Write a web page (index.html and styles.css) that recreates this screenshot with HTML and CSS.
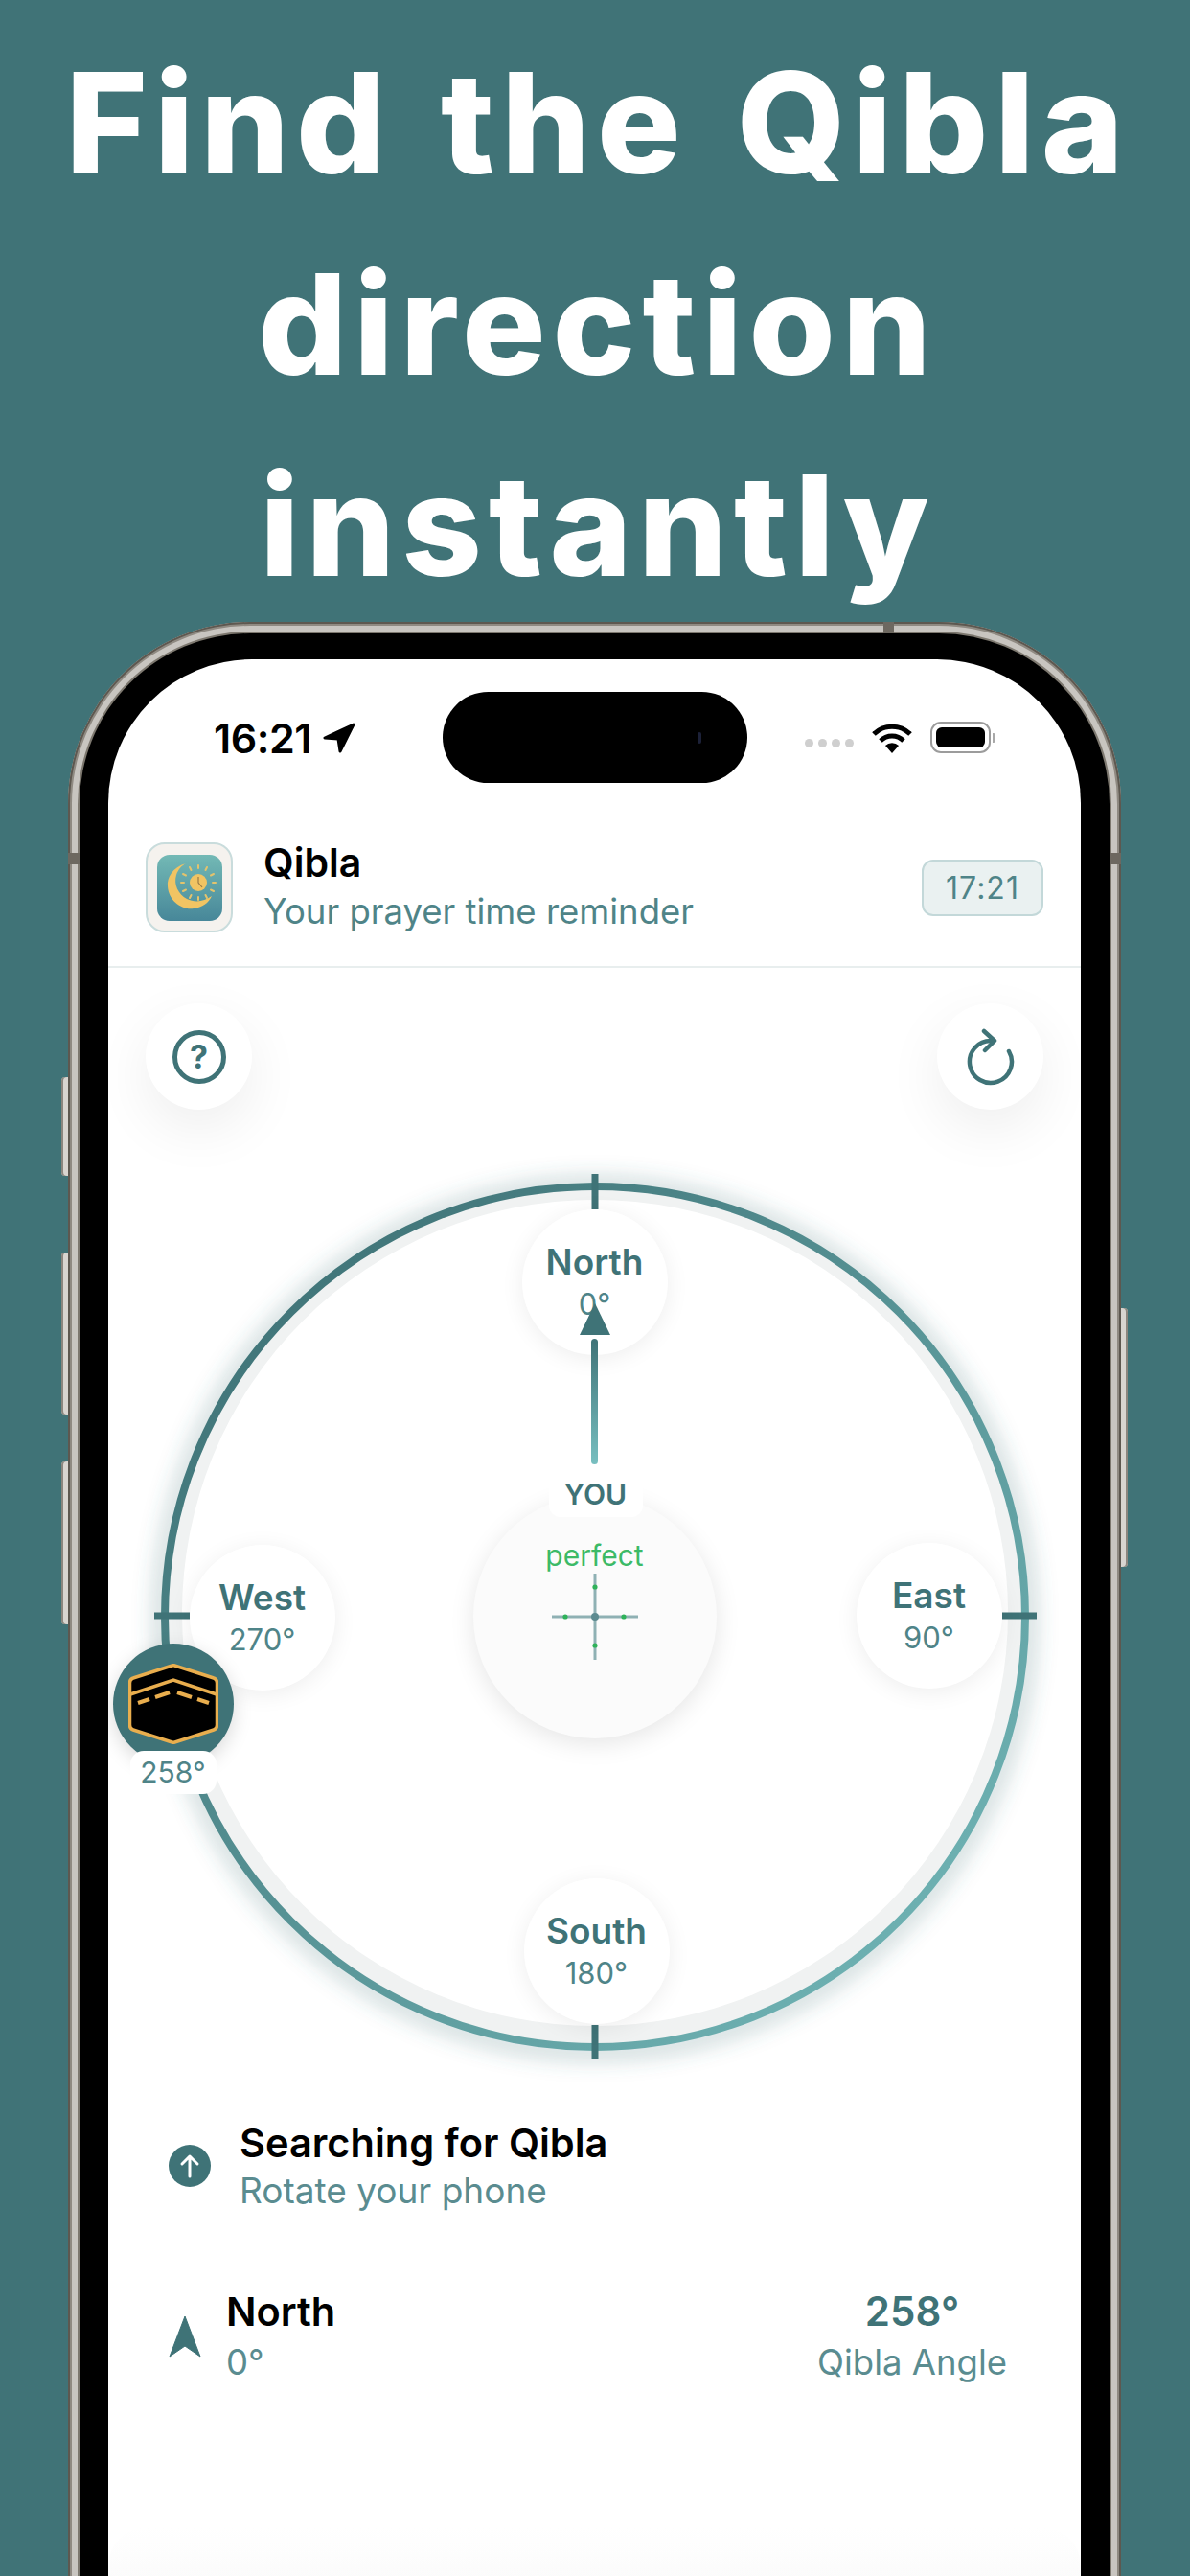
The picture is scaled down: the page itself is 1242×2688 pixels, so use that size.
FILE: index.html
```html
<!DOCTYPE html>
<html lang="en">
<head>
    <meta charset="UTF-8">
    <meta name="viewport" content="width=device-width, initial-scale=1.0">
    <title>Find the Qibla direction instantly</title>
    <link rel="stylesheet" href="styles.css">
</head>
<body>

    <div class="page">
        <h1 class="headline">Find the Qibla<br>direction<br>instantly</h1>

        <div class="phone">
            <!-- Side buttons -->
            <span class="side-btn side-mute"></span>
            <span class="side-btn side-up"></span>
            <span class="side-btn side-down"></span>
            <span class="side-btn side-power"></span>

            <!-- Antenna lines on the frame -->
            <span class="antenna antenna-left"></span>
            <span class="antenna antenna-right"></span>
            <span class="antenna antenna-top"></span>

            <div class="bezel">
                <div class="screen">

                    <!-- Status bar -->
                    <div class="status-bar">
                        <div class="status-left">
                            <span class="status-time">16:21</span>
                            <svg class="status-arrow" viewBox="0 0 34 32"><path d="M32 2 L2 16 L16 17 L18 30 Z" fill="#000" stroke="#000" stroke-width="3" stroke-linejoin="round"/></svg>
                        </div>
                        <div class="island"><span class="island-dot"></span></div>
                        <div class="status-right">
                            <div class="signal"><i></i><i></i><i></i><i></i></div>
                            <svg class="wifi" viewBox="0 0 44 32">
                                <path d="M3 12 A27 27 0 0 1 41 12" fill="none" stroke="#000" stroke-width="5"/>
                                <path d="M10 19 A17 17 0 0 1 34 19" fill="none" stroke="#000" stroke-width="5"/>
                                <path d="M15 24 A10 10 0 0 1 29 24 L22 32 Z" fill="#000"/>
                            </svg>
                            <div class="battery"><span class="battery-level"></span></div>
                            <span class="battery-nub"></span>
                        </div>
                    </div>

                    <!-- App header -->
                    <div class="app-header">
                        <div class="app-icon">
                            <svg viewBox="0 0 68 69" width="68" height="69">
                                <defs>
                                    <linearGradient id="icon-bg" x1="0" y1="0" x2="0" y2="1">
                                        <stop offset="0" stop-color="#73b9b5"/>
                                        <stop offset="1" stop-color="#478799"/>
                                    </linearGradient>
                                </defs>
                                <rect width="68" height="69" rx="13" fill="url(#icon-bg)"/>
                                <path d="M30 9 C16 13 10 24 11 33 C12 48 26 58 38 56 C47 55 54 50 57 43 C49 49 39 50 31 46 C22 41 17 31 20 21 C22 15 26 11 30 9 Z" fill="#f1c463"/>
                                <circle cx="43" cy="29" r="9" fill="#f1c463"/>
                                <path d="M43 23 L43 29 L47 34" fill="none" stroke="#9a7a45" stroke-width="1.2"/>
                                <g stroke="#e3c36d" stroke-width="2" stroke-linecap="round">
                                    <line x1="43" y1="11" x2="43" y2="14"/>
                                    <line x1="52" y1="13" x2="50.5" y2="16"/>
                                    <line x1="59" y1="20" x2="56" y2="21.5"/>
                                    <line x1="61" y1="29" x2="58" y2="29"/>
                                    <line x1="59" y1="38" x2="56" y2="36.5"/>
                                    <line x1="52" y1="45" x2="50.5" y2="42"/>
                                    <line x1="43" y1="47" x2="43" y2="44"/>
                                    <line x1="34" y1="45" x2="35.5" y2="42"/>
                                    <line x1="27" y1="38" x2="30" y2="36.5"/>
                                    <line x1="25" y1="29" x2="28" y2="29"/>
                                    <line x1="27" y1="20" x2="30" y2="21.5"/>
                                    <line x1="34" y1="13" x2="35.5" y2="16"/>
                                </g>
                            </svg>
                        </div>
                        <div class="app-text">
                            <div class="app-title">Qibla</div>
                            <div class="app-subtitle">Your prayer time reminder</div>
                        </div>
                        <div class="time-chip">17:21</div>
                    </div>

                    <!-- Help and reload buttons -->
                    <div class="tools">
                        <div class="tool-btn">
                            <span class="help-icon">?</span>
                        </div>
                        <div class="tool-btn">
                            <svg class="reload-icon" viewBox="0 0 50 60">
                                <path d="M25 13 A22 22 0 1 0 44 24" fill="none" stroke="#3f7377" stroke-width="4.5" stroke-linecap="round"/>
                                <path d="M18 3 L29 13 L19 23" fill="none" stroke="#3f7377" stroke-width="4.5" stroke-linecap="round" stroke-linejoin="round"/>
                            </svg>
                        </div>
                    </div>

                    <!-- Compass dial -->
                    <div class="dial">
                        <svg class="dial-ring" viewBox="0 0 930 930">
                            <defs>
                                <linearGradient id="ring-color" x1="0" y1="0" x2="1" y2="1">
                                    <stop offset="0.1" stop-color="#3f7377"/>
                                    <stop offset="0.9" stop-color="#6fb3b4"/>
                                </linearGradient>
                                <filter id="ring-glow" x="-10%" y="-10%" width="120%" height="120%">
                                    <feGaussianBlur stdDeviation="11"/>
                                </filter>
                            </defs>
                            <circle cx="465" cy="467" r="452" fill="none" stroke="#3f7377" stroke-opacity="0.3" stroke-width="16" filter="url(#ring-glow)"/>
                            <circle cx="465" cy="465" r="447" fill="#f0f2f2"/>
                            <circle cx="465" cy="461" r="431" fill="#fff"/>
                            <circle cx="465" cy="465" r="449" fill="none" stroke="url(#ring-color)" stroke-width="8"/>
                            <g stroke="#3f7377" stroke-width="7">
                                <line x1="465" y1="3" x2="465" y2="40"/>
                                <line x1="465" y1="891" x2="465" y2="926"/>
                                <line x1="5" y1="464" x2="42" y2="464"/>
                                <line x1="890" y1="464" x2="926" y2="464"/>
                            </g>
                        </svg>

                        <div class="point point-north">
                            <span class="point-name">North</span>
                            <span class="point-deg">0°</span>
                        </div>
                        <div class="point point-east">
                            <span class="point-name">East</span>
                            <span class="point-deg">90°</span>
                        </div>
                        <div class="point point-south">
                            <span class="point-name">South</span>
                            <span class="point-deg">180°</span>
                        </div>
                        <div class="point point-west">
                            <span class="point-name">West</span>
                            <span class="point-deg">270°</span>
                        </div>

                        <!-- Needle -->
                        <div class="needle">
                            <span class="needle-head"></span>
                            <span class="needle-line"></span>
                        </div>

                        <!-- Centre level -->
                        <div class="level">
                            <span class="level-state">perfect</span>
                            <svg class="level-cross" viewBox="0 0 90 90">
                                <g stroke="#8fb1b4" stroke-width="3">
                                    <line x1="45" y1="0" x2="45" y2="90"/>
                                    <line x1="0" y1="45" x2="90" y2="45"/>
                                </g>
                                <g fill="#2fb25a">
                                    <circle cx="45" cy="14" r="2.6"/>
                                    <circle cx="45" cy="75" r="2.6"/>
                                    <circle cx="14" cy="45" r="2.6"/>
                                    <circle cx="75" cy="45" r="2.6"/>
                                </g>
                                <circle cx="45" cy="45" r="4" fill="#5d8b90"/>
                            </svg>
                        </div>
                        <span class="you-label">YOU</span>

                        <!-- Kaaba marker -->
                        <div class="kaaba">
                            <svg class="kaaba-icon" viewBox="0 0 94 84">
                                <path d="M47 1.5 L89 15 Q92.5 16 92.5 20 L92.5 64 Q92.5 68 89 69 L47 82.5 L5 69 Q1.5 68 1.5 64 L1.5 20 Q1.5 16 5 15 Z" fill="#000" stroke="#e9ae4e" stroke-width="3.5"/>
                                <path d="M2 32 L47 17 L92 32" fill="none" stroke="#e9ae4e" stroke-width="3.5"/>
                                <g stroke="#e9ae4e" stroke-width="4" fill="none">
                                    <line x1="10" y1="41" x2="22" y2="37"/>
                                    <line x1="28" y1="35" x2="43" y2="30"/>
                                    <line x1="51" y1="30" x2="66" y2="35"/>
                                    <line x1="72" y1="37" x2="84" y2="41"/>
                                </g>
                            </svg>
                        </div>
                        <span class="kaaba-deg">258°</span>
                    </div>

                    <!-- Info rows -->
                    <div class="info">
                        <div class="info-row">
                            <div class="info-up">
                                <svg viewBox="0 0 44 44" width="44" height="44">
                                    <path d="M22 33 L22 12 M14 20 L22 12 L30 20" fill="none" stroke="#fff" stroke-width="3" stroke-linecap="round" stroke-linejoin="round"/>
                                </svg>
                            </div>
                            <div>
                                <div class="info-title">Searching for Qibla</div>
                                <div class="info-sub">Rotate your phone</div>
                            </div>
                        </div>
                        <div class="info-row info-split">
                            <div class="info-heading">
                                <svg class="info-nav" viewBox="0 0 34 44"><path d="M17 1 L33 43 L17 32 L1 43 Z" fill="#3f7377" stroke="#3f7377" stroke-width="1" stroke-linejoin="round"/></svg>
                                <div>
                                    <div class="info-title">North</div>
                                    <div class="info-sub">0°</div>
                                </div>
                            </div>
                            <div class="info-angle">
                                <div class="angle-value">258°</div>
                                <div class="info-sub">Qibla Angle</div>
                            </div>
                        </div>
                    </div>

                    <!-- Bottom fade -->
                    <div class="bottom-bar"></div>

                </div>
            </div>
        </div>
    </div>

</body>
</html>
```

FILE: styles.css
```css
/* Page */
body {
    margin: 0;
    font-family: 'Inter', 'Liberation Sans', sans-serif;
    background: #407377;
}

.page {
    width: 1242px;
    height: 2688px;
    overflow: hidden;
    background: #407377;
}

/* Headline */
.headline {
    margin: 0;
    padding: 23px 0 0 6px;
    height: 626px;
    box-sizing: border-box;
    font-size: 146px;
    font-weight: 800;
    letter-spacing: 7px;
    word-spacing: 12px;
    line-height: 210px;
    text-align: center;
    color: #ffffff;
}

/* Phone frame */
.phone {
    position: relative;
    box-sizing: border-box;
    margin-left: 71px;
    margin-top: 23px;
    width: 1099px;
    height: 2500px;
    padding: 12px;
    background: #c8c5c0;
    border-radius: 190px;
    box-shadow: inset 0 0 0 2px #5d5850, inset 0 0 0 4px #8f8a82;
}

.side-btn {
    position: absolute;
    left: -7px;
    width: 7px;
    background: #d8d5d0;
    border-radius: 4px 0 0 4px;
    box-shadow: inset 2px 0 0 #8b867e;
}

.side-mute { top: 475px; height: 103px; }
.side-up { top: 658px; height: 169px; }
.side-down { top: 876px; height: 170px; }

.side-power {
    left: auto;
    right: -7px;
    top: 716px;
    height: 270px;
    border-radius: 0 4px 4px 0;
    box-shadow: inset -2px 0 0 #8b867e;
}

.antenna {
    position: absolute;
    background: #6d6860;
}

.antenna-left { top: 241px; left: 0; width: 12px; height: 12px; }
.antenna-right { top: 241px; right: 0; width: 12px; height: 12px; }
.antenna-top { top: 0; left: 851px; width: 11px; height: 12px; }

.bezel {
    box-sizing: border-box;
    height: 100%;
    padding: 27px 30px;
    background: #000;
    border-radius: 178px;
    box-shadow: 0 0 0 2px #7d786f;
}

.screen {
    position: relative;
    height: 100%;
    background: #ffffff;
    border-radius: 150px;
    overflow: hidden;
}

/* Status bar */
.status-bar {
    display: grid;
    grid-template-columns: 1fr 318px 1fr;
    align-items: center;
    padding-top: 34px;
}

.status-left {
    display: flex;
    align-items: center;
    gap: 12px;
    padding-left: 110px;
}

.status-time {
    font-size: 43px;
    font-weight: 600;
    letter-spacing: -0.5px;
    color: #000;
}

.status-arrow {
    width: 34px;
    height: 32px;
}

.island {
    position: relative;
    height: 95px;
    background: #000;
    border-radius: 48px;
}

.island-dot {
    position: absolute;
    top: 42px;
    left: 266px;
    width: 4px;
    height: 12px;
    background: #1c2138;
    border-radius: 2px;
}

.status-right {
    display: flex;
    align-items: center;
    justify-content: flex-end;
    padding-right: 89px;
}

.signal {
    display: flex;
    gap: 5px;
    margin-top: 12px;
    margin-right: 18px;
}

.signal i {
    width: 9px;
    height: 9px;
    background: #cfcfcf;
    border-radius: 50%;
}

.wifi {
    width: 44px;
    height: 32px;
    margin-right: 18px;
}

.battery {
    box-sizing: border-box;
    width: 63px;
    height: 33px;
    padding: 4px;
    border: 2px solid #9c9c9c;
    border-radius: 11px;
}

.battery-level {
    display: block;
    height: 100%;
    background: #000;
    border-radius: 6px;
}

.battery-nub {
    width: 3px;
    height: 10px;
    margin-left: 2px;
    background: #a8a8a8;
    border-radius: 0 2px 2px 0;
}

/* App header */
.app-header {
    display: flex;
    align-items: center;
    padding: 62px 39px 35px;
    border-bottom: 2px solid #e8eeee;
}

.app-icon {
    display: flex;
    align-items: center;
    justify-content: center;
    box-sizing: border-box;
    flex: none;
    width: 91px;
    height: 94px;
    background: #f5f2ee;
    border: 2px solid #c9dcdc;
    border-radius: 20px;
}

.app-text {
    flex: 1;
    margin-left: 32px;
}

.app-title {
    font-size: 41px;
    font-weight: 600;
    line-height: 42px;
    color: #000;
}

.app-subtitle {
    margin-top: 8px;
    font-size: 36.5px;
    line-height: 44px;
    color: #4f8488;
}

.time-chip {
    width: 127px;
    height: 59px;
    box-sizing: border-box;
    background: #eaf1f1;
    border: 2px solid #c3d8d9;
    border-radius: 12px;
    font-size: 32px;
    line-height: 55px;
    text-align: center;
    letter-spacing: 1px;
    color: #4f8488;
}

/* Help and reload buttons */
.tools {
    display: flex;
    justify-content: space-between;
    padding: 37px 39px 0;
}

.tool-btn {
    display: flex;
    align-items: center;
    justify-content: center;
    width: 111px;
    height: 111px;
    background: #ffffff;
    border-radius: 50%;
    box-shadow: 0 20px 60px rgba(0, 0, 0, 0.07);
}

.help-icon {
    box-sizing: border-box;
    width: 56px;
    height: 56px;
    border: 5px solid #3f7377;
    border-radius: 50%;
    font-size: 34px;
    font-weight: 700;
    line-height: 46px;
    text-align: center;
    color: #3f7377;
}

.reload-icon {
    width: 50px;
    height: 60px;
}

/* Compass dial */
.dial {
    position: relative;
    width: 930px;
    height: 930px;
    margin: 64px auto 0;
}

.dial-ring {
    position: absolute;
    top: 0;
    left: 0;
    width: 930px;
    height: 930px;
    overflow: visible;
}

.point {
    position: absolute;
    display: flex;
    flex-direction: column;
    align-items: center;
    justify-content: center;
    width: 152px;
    height: 152px;
    background: #ffffff;
    border-radius: 50%;
    box-shadow: 0 4px 24px rgba(0, 0, 0, 0.07);
}

.point-north { top: 40px; left: 389px; }
.point-east { top: 388px; left: 738px; }
.point-south { top: 738px; left: 391px; }
.point-west { top: 390px; left: 42px; }

.point-name {
    font-size: 37px;
    font-weight: 600;
    line-height: 46px;
    color: #3f7377;
}

.point-deg {
    font-size: 31px;
    line-height: 42px;
    color: #4f8488;
}

/* Needle */
.needle {
    position: absolute;
    top: 138px;
    left: 449px;
    display: flex;
    flex-direction: column;
    align-items: center;
    width: 32px;
}

.needle-head {
    width: 0;
    height: 0;
    border-left: 16px solid transparent;
    border-right: 16px solid transparent;
    border-bottom: 33px solid #3f7377;
}

.needle-line {
    width: 7px;
    height: 131px;
    margin-top: 4px;
    background: linear-gradient(to bottom, #3f7377, #78bfc0);
    border-radius: 4px;
}

/* Centre level */
.level {
    position: absolute;
    top: 338px;
    left: 338px;
    display: flex;
    flex-direction: column;
    align-items: center;
    box-sizing: border-box;
    width: 254px;
    height: 254px;
    padding-top: 43px;
    background: #fbfbfb;
    border-radius: 50%;
    box-shadow: 0 6px 26px rgba(0, 0, 0, 0.1);
}

.level-state {
    font-size: 30px;
    line-height: 40px;
    color: #3cba67;
}

.level-cross {
    width: 90px;
    height: 90px;
    margin-top: -1px;
}

.you-label {
    position: absolute;
    top: 313px;
    left: 417px;
    width: 98px;
    height: 48px;
    background: #ffffff;
    border-radius: 12px;
    font-size: 30px;
    font-weight: 600;
    line-height: 48px;
    text-align: center;
    color: #3f7377;
}

/* Kaaba marker */
.kaaba {
    position: absolute;
    top: 493px;
    left: -38px;
    display: flex;
    align-items: center;
    justify-content: center;
    width: 126px;
    height: 126px;
    background: #3f7377;
    border-radius: 50%;
    box-shadow: 0 6px 20px rgba(0, 0, 0, 0.15);
}

.kaaba-icon {
    width: 94px;
    height: 84px;
}

.kaaba-deg {
    position: absolute;
    top: 605px;
    left: -20px;
    width: 90px;
    height: 45px;
    background: #ffffff;
    border-radius: 14px;
    font-size: 30px;
    line-height: 45px;
    text-align: center;
    color: #4f8488;
}

/* Info rows */
.info {
    display: flex;
    flex-direction: column;
    gap: 78px;
    padding: 59px 77px 0 63px;
}

.info-row {
    display: flex;
    align-items: center;
    gap: 30px;
}

.info-split {
    justify-content: space-between;
}

.info-split .info-sub {
    margin-top: 5px;
    font-size: 36.5px;
}

.info-up {
    width: 44px;
    height: 44px;
    background: #3f7377;
    border-radius: 50%;
}

.info-heading {
    display: flex;
    align-items: center;
    gap: 26px;
}

.info-nav {
    width: 34px;
    height: 44px;
}

.info-title {
    font-size: 41.5px;
    font-weight: 600;
    line-height: 50px;
    color: #000;
}

.info-sub {
    margin-top: 2px;
    font-size: 37px;
    line-height: 46px;
    color: #5a8c90;
}

.info-angle {
    text-align: center;
}

.angle-value {
    font-size: 42px;
    font-weight: 600;
    line-height: 50px;
    color: #3f7377;
}

/* Bottom fade */
.bottom-bar {
    position: absolute;
    top: 1949px;
    left: 0;
    right: 0;
    height: 100px;
    background: linear-gradient(to bottom, #ffffff, #f8f8f8);
    border-radius: 40px 40px 0 0;
}
```
